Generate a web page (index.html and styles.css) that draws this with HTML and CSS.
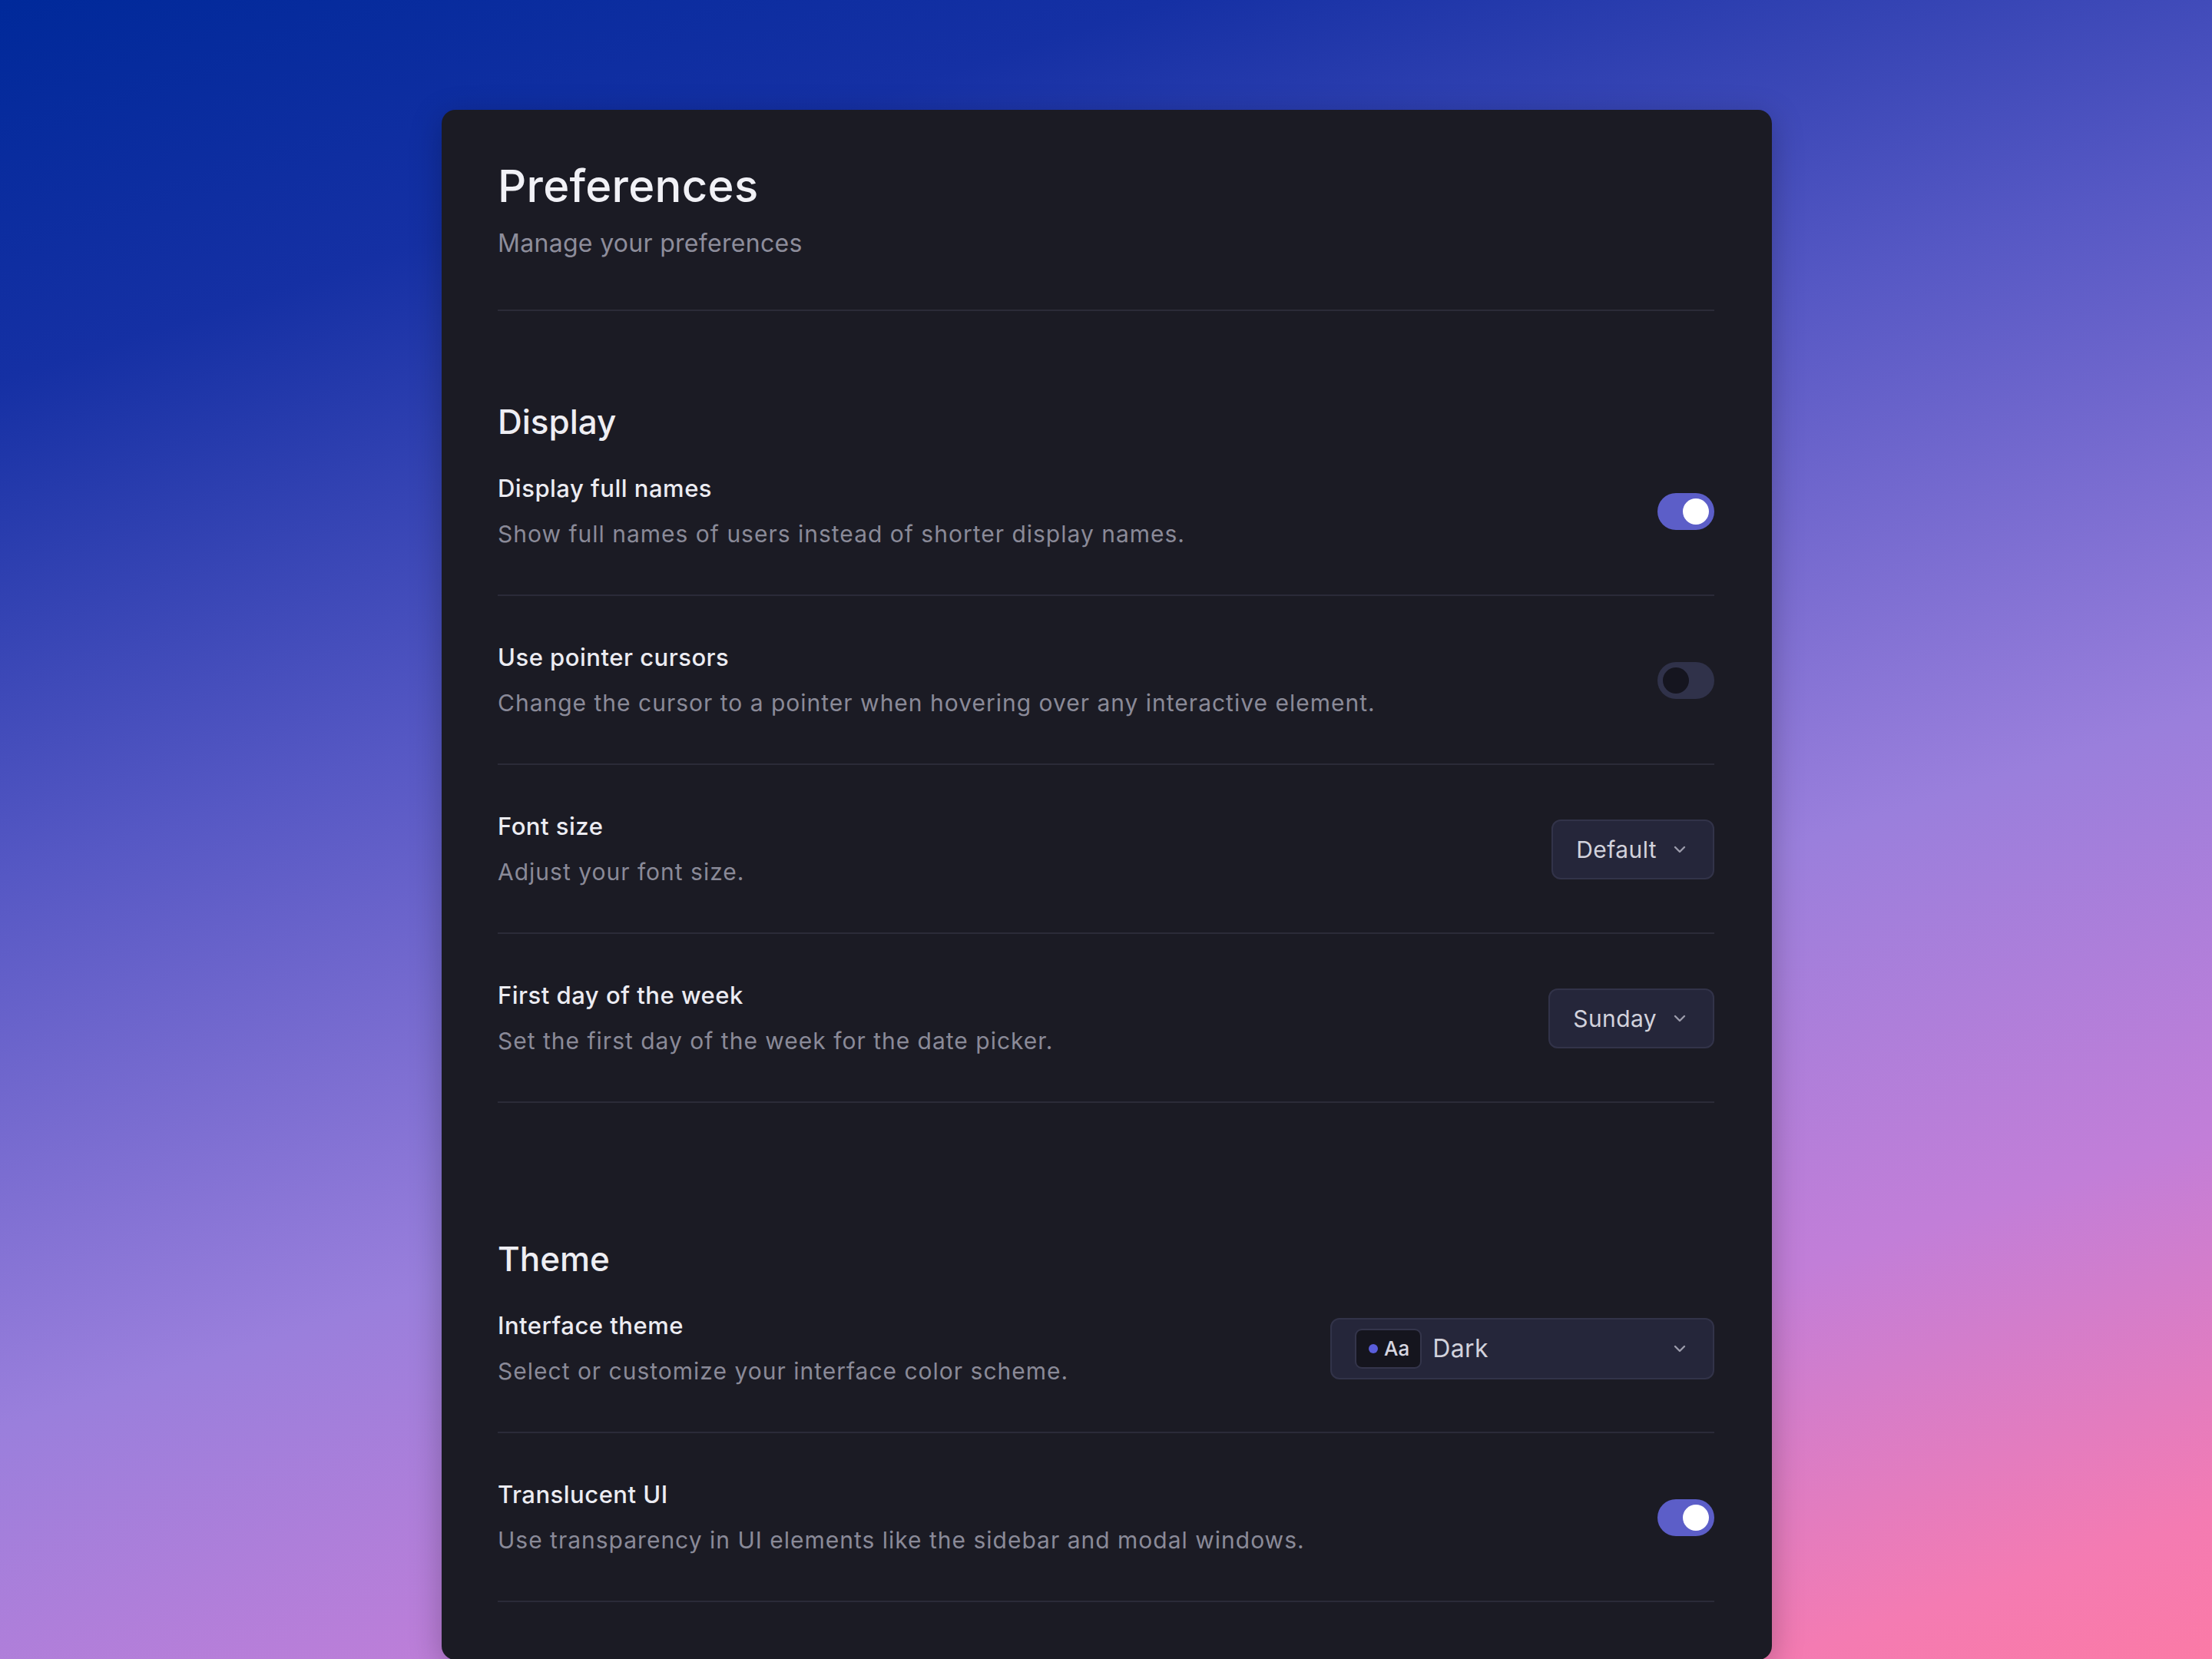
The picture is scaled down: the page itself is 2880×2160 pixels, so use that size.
FILE: index.html
```html
<!DOCTYPE html>
<html lang="en">
<head>
  <meta charset="UTF-8">
  <title>Preferences</title>
  <link rel="stylesheet" href="styles.css">
</head>
<body>

<div class="card">
  <div class="card-header">
    <h1>Preferences</h1>
    <p>Manage your preferences</p>
  </div>

  <section class="group">
    <h2>Display</h2>

    <div class="row">
      <div class="row-text">
        <div class="row-label">Display full names</div>
        <div class="row-desc">Show full names of users instead of shorter display names.</div>
      </div>
      <div class="toggle on"><span class="knob"></span></div>
    </div>

    <div class="row">
      <div class="row-text">
        <div class="row-label">Use pointer cursors</div>
        <div class="row-desc">Change the cursor to a pointer when hovering over any interactive element.</div>
      </div>
      <div class="toggle"><span class="knob"></span></div>
    </div>

    <div class="row">
      <div class="row-text">
        <div class="row-label">Font size</div>
        <div class="row-desc">Adjust your font size.</div>
      </div>
      <div class="select">
        <span>Default</span>
        <svg class="chevron" viewBox="0 0 16 16"><polyline points="4,6 8,10 12,6"/></svg>
      </div>
    </div>

    <div class="row">
      <div class="row-text">
        <div class="row-label">First day of the week</div>
        <div class="row-desc">Set the first day of the week for the date picker.</div>
      </div>
      <div class="select">
        <span>Sunday</span>
        <svg class="chevron" viewBox="0 0 16 16"><polyline points="4,6 8,10 12,6"/></svg>
      </div>
    </div>
  </section>

  <section class="group theme">
    <h2>Theme</h2>

    <div class="row">
      <div class="row-text">
        <div class="row-label">Interface theme</div>
        <div class="row-desc">Select or customize your interface color scheme.</div>
      </div>
      <div class="select wide">
        <span class="badge"><i class="dot"></i>Aa</span>
        <span class="value">Dark</span>
        <svg class="chevron" viewBox="0 0 16 16"><polyline points="4,6 8,10 12,6"/></svg>
      </div>
    </div>

    <div class="row">
      <div class="row-text">
        <div class="row-label">Translucent UI</div>
        <div class="row-desc">Use transparency in UI elements like the sidebar and modal windows.</div>
      </div>
      <div class="toggle on"><span class="knob"></span></div>
    </div>
  </section>
</div>

</body>
</html>
```

FILE: styles.css
```css
html, body {
  margin: 0;
  padding: 0;
}
body {
  height: 2160px;
  overflow: hidden;
  font-family: 'Inter', 'Noto Sans', sans-serif;
  background: linear-gradient(162deg, #00299a 0%, #1530a4 16%, #5658c4 37%, #9a7fdc 60%, #c27ed8 78%, #f47bb2 94%, #fb7aa6 100%);
}
.card {
  box-sizing: border-box;
  width: 1732px;
  margin: 143px 0 0 575px;
  padding: 65px 75px 75px 73px;
  background-color: #1b1b24;
  border-radius: 18px;
  box-shadow: 0 10px 40px rgba(0,0,0,0.25);
}
.card-header {
  padding-bottom: 66px;
  border-bottom: 2px solid #2b2b38;
}
.card-header h1 {
  margin: 0;
  font-size: 58px;
  line-height: 68px;
  font-weight: 500;
  letter-spacing: 0.3px;
  color: #f1f1f6;
}
.card-header p {
  margin: 21px 0 0;
  font-size: 32px;
  line-height: 40px;
  letter-spacing: 0.3px;
  color: #8d8d9b;
}
.group {
  padding-top: 117px;
}
.group.theme {
  padding-top: 176px;
}
.group h2 {
  margin: 0 0 40px;
  font-size: 44px;
  line-height: 54px;
  font-weight: 500;
  color: #eeeef3;
}
.row {
  display: flex;
  align-items: center;
  justify-content: space-between;
  padding: 60px 0 59px;
  border-bottom: 2px solid #2b2b38;
}
.group h2 + .row {
  padding-top: 0;
}
.row-label {
  font-size: 31px;
  line-height: 40px;
  font-weight: 500;
  letter-spacing: 0.5px;
  color: #ececf2;
}
.row-desc {
  margin-top: 19px;
  font-size: 30px;
  line-height: 40px;
  color: #8a8a98;
  letter-spacing: 1px;
}
.toggle {
  position: relative;
  width: 74px;
  height: 48px;
  border-radius: 24px;
  background-color: #30324a;
  flex-shrink: 0;
}
.toggle .knob {
  position: absolute;
  top: 7px;
  left: 7px;
  width: 34px;
  height: 34px;
  border-radius: 50%;
  background-color: #15151f;
}
.toggle.on {
  background-color: #5c5ec8;
}
.toggle.on .knob {
  left: auto;
  right: 7px;
  background-color: #fff;
}
.select {
  box-sizing: border-box;
  display: flex;
  align-items: center;
  height: 78px;
  padding: 0 31px 0 30px;
  gap: 18px;
  background-color: #25263a;
  border: 2px solid #323349;
  border-radius: 12px;
  font-size: 30px;
  letter-spacing: 0.4px;
  color: #d2d2dc;
  flex-shrink: 0;
}
.select .chevron {
  width: 24px;
  height: 24px;
  fill: none;
  stroke: #9c9cab;
  stroke-width: 1.6;
  stroke-linecap: round;
  stroke-linejoin: round;
}
.select.wide {
  width: 500px;
  height: 80px;
  gap: 14px;
}
.select.wide .value {
  flex: 1;
  font-size: 32px;
}
.badge {
  box-sizing: border-box;
  display: flex;
  align-items: center;
  gap: 8px;
  height: 52px;
  padding: 0 14px 0 16px;
  background-color: #15151e;
  border: 2px solid #34354b;
  border-radius: 9px;
  font-size: 26px;
  font-weight: 500;
  letter-spacing: 0;
  color: #d6d6e0;
}
.badge .dot {
  width: 12px;
  height: 12px;
  border-radius: 50%;
  background-color: #5a5edb;
}
```
